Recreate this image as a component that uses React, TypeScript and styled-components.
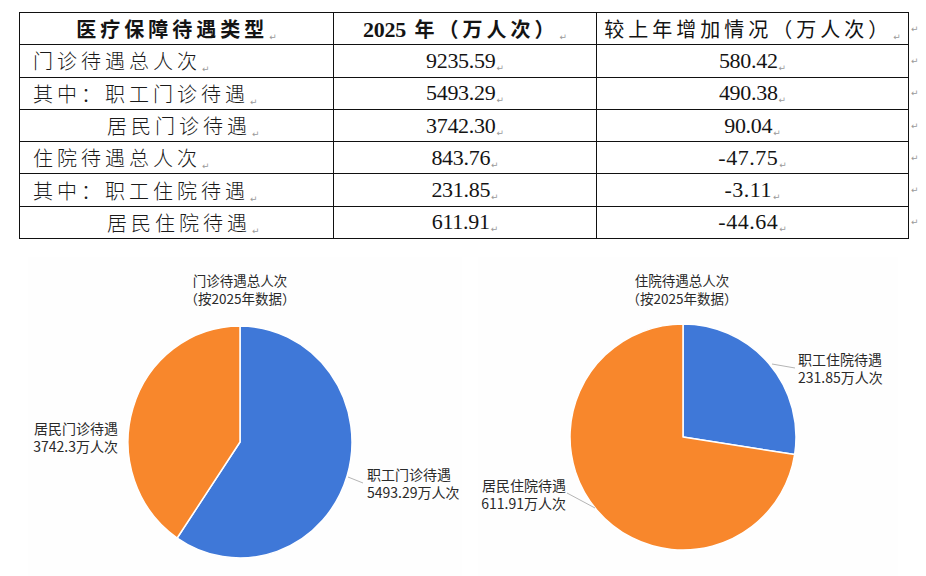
import React from 'react';
import styled, { createGlobalStyle } from 'styled-components';

const GlobalStyle = createGlobalStyle`
  html, body {
    margin: 0;
    padding: 0;
    background: #ffffff;
  }
  body {
    font-family: "Noto Sans CJK SC", "Liberation Sans", sans-serif;
    color: #1c1c1c;
  }
`;

const cjk = `"Noto Sans CJK SC", sans-serif`;
const num = `"Liberation Serif", "Noto Sans CJK SC", serif`;

const BLUE = '#3f78d8';
const ORANGE = '#f8872c';

type Row = { label: string; indent?: boolean; total: string; change: string };

const rows: Row[] = [
  { label: '门诊待遇总人次', total: '9235.59', change: '580.42' },
  { label: '其中：职工门诊待遇', total: '5493.29', change: '490.38' },
  { label: '居民门诊待遇', indent: true, total: '3742.30', change: '90.04' },
  { label: '住院待遇总人次', total: '843.76', change: '-47.75' },
  { label: '其中：职工住院待遇', total: '231.85', change: '-3.11' },
  { label: '居民住院待遇', indent: true, total: '611.91', change: '-44.64' },
];

type Slice = { value: number; color: string };
type Label = { lines: [string, string]; x: number; y: number; anchor: 'start' | 'end'; leader?: [number, number, number, number] };

type Chart = {
  title: string;
  width: number;
  shift: number;
  cx: number;
  cy: number;
  rx: number;
  ry: number;
  slices: Slice[];
  labels: Label[];
};

const charts: Chart[] = [
  {
    title: '门诊待遇总人次',
    width: 434,
    shift: -5,
    cx: 212,
    cy: 135,
    rx: 112,
    ry: 116,
    slices: [
      { value: 5493.29, color: BLUE },
      { value: 3742.3, color: ORANGE },
    ],
    labels: [
      { lines: ['居民门诊待遇', '3742.3万人次'], x: 90, y: 121, anchor: 'end' },
      { lines: ['职工门诊待遇', '5493.29万人次'], x: 339, y: 167, anchor: 'start', leader: [320, 170, 335, 176] },
    ],
  },
  {
    title: '住院待遇总人次',
    width: 420,
    shift: -6,
    cx: 205,
    cy: 130,
    rx: 113,
    ry: 113,
    slices: [
      { value: 231.85, color: BLUE },
      { value: 611.91, color: ORANGE },
    ],
    labels: [
      { lines: ['职工住院待遇', '231.85万人次'], x: 320, y: 52, anchor: 'start', leader: [294, 57, 317, 61] },
      { lines: ['居民住院待遇', '611.91万人次'], x: 88, y: 178, anchor: 'end', leader: [89, 186, 117, 201] },
    ],
  },
];

const slicePaths = (c: Chart) => {
  const total = c.slices.reduce((s, x) => s + x.value, 0);
  let start = 0;
  return c.slices.map(s => {
    const sweep = (s.value / total) * Math.PI * 2;
    const end = start + sweep;
    const p = (a: number) => `${c.cx + c.rx * Math.sin(a)} ${c.cy - c.ry * Math.cos(a)}`;
    const d = `M ${c.cx} ${c.cy} L ${p(start)} A ${c.rx} ${c.ry} 0 ${sweep > Math.PI ? 1 : 0} 1 ${p(end)} Z`;
    start = end;
    return { d, color: s.color };
  });
};

const Mark: React.FC = () => <Return>↵</Return>;

const App: React.FC = () => {
  return (
    <>
      <GlobalStyle />
      <Page>
        <Table>
          <tbody>
            <tr>
              <HeadCell $bold>
                医疗保障待遇类型
                <Mark />
              </HeadCell>
              <HeadCell $bold>
                <Num $bold>2025</Num> 年（万人次）
                <Mark />
              </HeadCell>
              <HeadCell>
                较上年增加情况（万人次）
                <Mark />
              </HeadCell>
              <RowEnd>↵</RowEnd>
            </tr>
            {rows.map(r => (
              <tr key={r.label}>
                <LabelCell $indent={r.indent}>
                  {r.label}
                  <Mark />
                </LabelCell>
                <ValueCell>
                  <Num>{r.total}</Num>
                  <Mark />
                </ValueCell>
                <ValueCell>
                  <Num $spaced={r.change.startsWith('-')}>{r.change}</Num>
                  <Mark />
                </ValueCell>
                <RowEnd>↵</RowEnd>
              </tr>
            ))}
          </tbody>
        </Table>

        <Charts>
          {charts.map(c => (
            <Panel key={c.title} $width={c.width}>
              <Title $shift={c.shift}>
                {c.title}
                <br />
                （按2025年数据）
              </Title>
              <svg width={c.width} height={270} viewBox={`0 0 ${c.width} 270`}>
                {slicePaths(c).map((s, i) => (
                  <path key={i} d={s.d} fill={s.color} stroke="#ffffff" strokeWidth={1.5} strokeLinejoin="round" />
                ))}
                {c.labels.map(l => (
                  <g key={l.lines[0]}>
                    {l.leader && (
                      <line
                        x1={l.leader[0]}
                        y1={l.leader[1]}
                        x2={l.leader[2]}
                        y2={l.leader[3]}
                        stroke="#b5b5b5"
                        strokeWidth={1}
                      />
                    )}
                    <ChartText x={l.x} y={l.y} textAnchor={l.anchor} dominantBaseline="central">
                      {l.lines[0]}
                    </ChartText>
                    <ChartText x={l.x} y={l.y + 18} textAnchor={l.anchor} dominantBaseline="central">
                      {l.lines[1]}
                    </ChartText>
                  </g>
                ))}
              </svg>
            </Panel>
          ))}
        </Charts>
      </Page>
    </>
  );
};

export default App;

const Page = styled.div`
  width: 926px;
  height: 576px;
  overflow: hidden;
  padding-top: 12px;
  box-sizing: border-box;
`;

const Table = styled.table`
  margin-left: 19px;
  border-collapse: collapse;
  table-layout: fixed;

  tr {
    height: 32.3px;
  }
`;

const Cell = styled.td`
  border: 1px solid #111;
  padding: 0;
  white-space: nowrap;
  vertical-align: middle;
`;

const HeadCell = styled(Cell)<{ $bold?: boolean }>`
  text-align: center;
  font-family: ${cjk};
  font-size: 20px;
  letter-spacing: 4px;
  font-weight: ${p => (p.$bold ? 700 : 400)};
  color: #141414;

  &:nth-child(1) {
    width: 313px;
  }
  &:nth-child(2) {
    width: 262px;
  }
  &:nth-child(3) {
    width: 311px;
  }
`;

const LabelCell = styled(Cell)<{ $indent?: boolean }>`
  padding-left: ${p => (p.$indent ? 87 : 13)}px;
  font-family: ${cjk};
  font-size: 20px;
  font-weight: 300;
  letter-spacing: 4px;
  color: #1a1a1a;
`;

const ValueCell = styled(Cell)`
  text-align: center;
`;

const Num = styled.span<{ $bold?: boolean; $spaced?: boolean }>`
  font-family: ${num};
  font-size: 22px;
  font-weight: ${p => (p.$bold ? 700 : 400)};
  letter-spacing: ${p => (p.$spaced ? '0.5px' : '-0.3px')};
  color: #141414;
`;

const Return = styled.span`
  font-family: "DejaVu Sans", sans-serif;
  font-size: 9px;
  font-weight: 400;
  letter-spacing: 0;
  color: #9a9a9a;
  margin-left: 1px;
  vertical-align: -3px;
`;

const RowEnd = styled.td`
  border: none;
  padding: 0 0 0 2px;
  width: 14px;
  font-family: "DejaVu Sans", sans-serif;
  font-size: 9px;
  color: #9a9a9a;
  vertical-align: middle;
`;

const Charts = styled.div`
  display: flex;
  gap: 16px;
  margin-top: 18px;
  padding-left: 28px;
`;

const Panel = styled.div<{ $width: number }>`
  width: ${p => p.$width}px;
  display: flex;
  flex-direction: column;
  background: #fefefe;
`;

const Title = styled.div<{ $shift: number }>`
  padding-top: 14px;
  margin-left: ${p => p.$shift * 2}px;
  text-align: center;
  font-family: ${cjk};
  font-size: 13.5px;
  line-height: 18px;
  color: #2a2a2a;
`;

const ChartText = styled.text`
  font-family: ${cjk};
  font-size: 14px;
  fill: #2a2a2a;
`;
